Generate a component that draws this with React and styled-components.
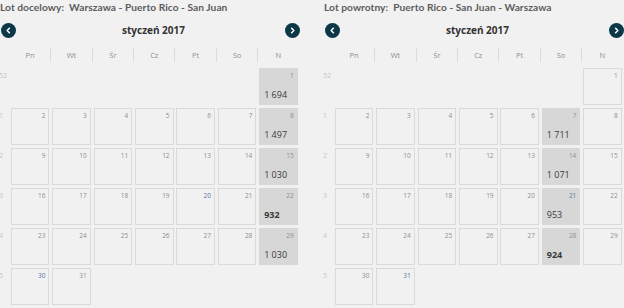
import React from "react";
import styled, { createGlobalStyle } from "styled-components";

const GlobalStyle = createGlobalStyle`
    html, body {
        margin: 0;
        padding: 0;
        background: #f1f1f1;
        font-family: "Open Sans", "Liberation Sans", sans-serif;
    }
`;

const Page = styled.div`
    display: flex;
    gap: 24px;
    width: 624px;
    height: 308px;
    overflow: hidden;
`;

const Panel = styled.section`
    width: 300px;
    flex: none;
`;

const Title = styled.h2`
    margin: 0;
    height: 15px;
    line-height: 15px;
    font-family: Lato, "Open Sans", sans-serif;
    font-size: 10.2px;
    font-weight: 700;
    letter-spacing: 0.05px;
    color: #5c5c5c;
    white-space: nowrap;
    span {
        margin-left: 5px;
    }
`;

const NavRow = styled.div`
    margin-top: 7px;
    height: 16px;
    display: flex;
    align-items: center;
    justify-content: space-between;
`;

const Month = styled.div`
    font-size: 10px;
    font-weight: 700;
    color: #333;
    padding-left: 6px;
`;

const NavButton = styled.button`
    width: 15px;
    height: 15px;
    border-radius: 50%;
    border: 0;
    padding: 0;
    margin-left: ${({side}) => side === 'left' ? '1px' : '0'};
    background: #0c3747;
    display: flex;
    align-items: center;
    justify-content: center;
    svg {
        display: block;
    }
`;

const Grid = styled.div`
    display: grid;
    grid-template-columns: 8px repeat(7, 38.6px);
    column-gap: 2.8px;
`;

const WeekDays = styled(Grid)`
    margin-top: 10px;
    height: 14px;
`;

const WeekDay = styled.div`
    position: relative;
    font-size: 7.5px;
    color: #909090;
    text-align: center;
    line-height: 14px;
    &:not(:nth-child(2))::before {
        content: '';
        position: absolute;
        left: -2px;
        top: 0;
        width: 1px;
        height: 14px;
        background: #dcdcdc;
    }
`;

const Days = styled(Grid)`
    margin-top: 5.5px;
    grid-auto-rows: 37px;
    row-gap: 3px;
`;

const WeekNo = styled.div`
    font-size: 7px;
    color: #c6c6c6;
    padding-top: 3px;
    margin-left: -1px;
`;

const Day = styled.div`
    position: relative;
    box-sizing: border-box;
    border: 1px solid ${({priced}) => priced ? '#d7d7d7' : '#dadada'};
    background: ${({priced}) => priced ? '#d7d7d7' : 'transparent'};
    display: flex;
    flex-direction: column;
    justify-content: space-between;
    padding: 3px 3px 4px 4px;
`;

const DayNum = styled.div`
    align-self: flex-end;
    font-size: 6.5px;
    line-height: 8px;
    color: ${({marked}) => marked ? '#5877a8' : '#8f8f8f'};
`;

const Price = styled.div`
    font-size: 9px;
    line-height: 10px;
    color: #3a3a3a;
    font-weight: ${({best}) => best ? 700 : 400};
`;

const Chevron = ({dir}) => (
    <svg width="7" height="7" viewBox="0 0 8 8">
        <polyline
            points={dir === 'left' ? "5,1.5 2.5,4 5,6.5" : "3,1.5 5.5,4 3,6.5"}
            fill="none" stroke="#fff" strokeWidth="1.8" strokeLinecap="round" strokeLinejoin="round"
        />
    </svg>
);

const weekdays = ['Pn', 'Wt', 'Śr', 'Cz', 'Pt', 'So', 'N'];
const weeks = [
    [52, [null, null, null, null, null, null, 1]],
    [1, [2, 3, 4, 5, 6, 7, 8]],
    [2, [9, 10, 11, 12, 13, 14, 15]],
    [3, [16, 17, 18, 19, 20, 21, 22]],
    [4, [23, 24, 25, 26, 27, 28, 29]],
    [5, [30, 31, null, null, null, null, null]],
];

const panels = [
    {
        label: 'Lot docelowy:',
        route: 'Warszawa - Puerto Rico - San Juan',
        marked: [20, 30],
        prices: {1: '1 694', 8: '1 497', 15: '1 030', 22: '932', 29: '1 030'},
        best: 22,
    },
    {
        label: 'Lot powrotny:',
        route: 'Puerto Rico - San Juan - Warszawa',
        marked: [21, 31],
        prices: {7: '1 711', 14: '1 071', 21: '953', 28: '924'},
        best: 28,
    },
];

function Calendar({label, route, marked, prices, best}) {
    return (
        <Panel>
            <Title>{label}<span>{route}</span></Title>
            <NavRow>
                <NavButton side="left" aria-label="Poprzedni miesiąc"><Chevron dir="left"/></NavButton>
                <Month>styczeń 2017</Month>
                <NavButton side="right" aria-label="Następny miesiąc"><Chevron dir="right"/></NavButton>
            </NavRow>
            <WeekDays>
                <div/>
                {weekdays.map(d => <WeekDay key={d}>{d}</WeekDay>)}
            </WeekDays>
            <Days>
                {weeks.map(([no, days]) => (
                    <React.Fragment key={no}>
                        <WeekNo>{no}</WeekNo>
                        {days.map((d, i) => d === null
                            ? <div key={i}/>
                            : (
                                <Day key={i} priced={!!prices[d]}>
                                    <DayNum marked={marked.includes(d)}>{d}</DayNum>
                                    {prices[d] && <Price best={d === best}>{prices[d]}</Price>}
                                </Day>
                            ))}
                    </React.Fragment>
                ))}
            </Days>
        </Panel>
    );
}

export default function App() {
    return (
        <>
            <GlobalStyle/>
            <Page>
                {panels.map(p => <Calendar key={p.label} {...p}/>)}
            </Page>
        </>
    );
}
